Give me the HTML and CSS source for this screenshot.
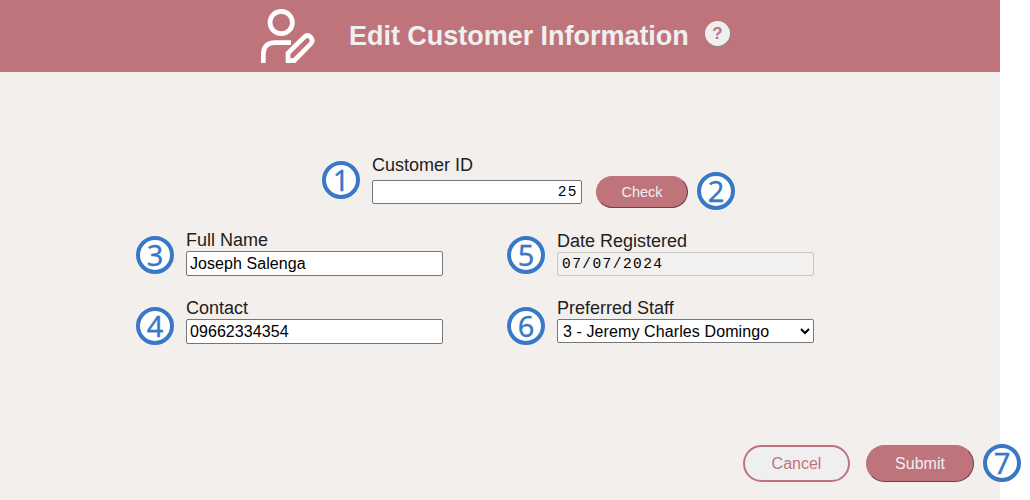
FILE: index.html
```html
<!DOCTYPE html>
<html lang="en">
<head>
<meta charset="utf-8">
<title>Edit Customer Information</title>
<link rel="stylesheet" href="styles.css">
</head>
<body>
<div class="page">
  <header class="header">
    <svg class="user-icon" viewBox="0 0 54 54" fill="none" stroke="#fff" stroke-width="4.7">
      <circle cx="20.2" cy="13.5" r="11.2"/>
      <path d="M2.3 54V45.5Q2.3 33.7 14 33.7H30"/>
      <path d="M27 51.7V44.2L43.2 28.2Q46.6 25 49.6 28.1Q52.8 31.6 49.6 35L33.2 51.7Z"/>
    </svg>
    <h1 class="title">Edit Customer Information</h1>
    <span class="help">?</span>
  </header>
  <form class="form">
    <div class="lookup">
      <div class="field lookup-field">
        <span class="badge">1</span>
        <label class="label">Customer ID</label>
        <input class="input mono right" type="text" value="25">
      </div>
      <div class="check-wrap">
        <button class="button check" type="button">Check</button>
        <span class="badge">2</span>
      </div>
    </div>
    <div class="fields">
      <div class="field">
        <span class="badge">3</span>
        <label class="label">Full Name</label>
        <input class="input tall" type="text" value="Joseph Salenga">
      </div>
      <div class="field date-field">
        <span class="badge">5</span>
        <label class="label">Date Registered</label>
        <input class="input mono" type="text" value="07/07/2024" disabled>
      </div>
      <div class="field">
        <span class="badge low">4</span>
        <label class="label">Contact</label>
        <input class="input tall" type="text" value="09662334354">
      </div>
      <div class="field">
        <span class="badge low">6</span>
        <label class="label">Preferred Staff</label>
        <select class="input select"><option>3 - Jeremy Charles Domingo</option></select>
      </div>
    </div>
    <div class="actions">
      <button class="button cancel" type="button">Cancel</button>
      <div class="submit-wrap">
        <button class="button submit" type="button">Submit</button>
        <span class="badge">7</span>
      </div>
    </div>
  </form>
</div>
</body>
</html>
```
FILE: styles.css
```css
* { box-sizing: border-box; }
body {
  margin: 0;
  background: #fff;
  font-family: "Liberation Sans", Arial, sans-serif;
  color: #212121;
}
.page {
  width: 1000px;
  height: 500px;
  background: #f3efec;
}
.header {
  display: flex;
  height: 72px;
  padding: 9px 0 0 261px;
  background: #bf747c;
}
.user-icon { width: 54px; height: 54px; flex: none; }
.title {
  margin: 0 0 0 34px;
  width: 340px;
  font-size: 27px;
  line-height: 54px;
  font-weight: bold;
  letter-spacing: -0.03px;
  color: #f0efef;
  white-space: nowrap;
}
.help {
  width: 25px;
  height: 25px;
  margin: 12px 0 0 16px;
  border-radius: 50%;
  background: #efefef;
  box-shadow: 1px 1px 1px #8e8588;
  color: #bf747c;
  font-size: 17px;
  font-weight: bold;
  line-height: 25px;
  text-align: center;
}
.form { padding: 83px 26px 0 0; }
.lookup {
  display: flex;
  gap: 14px;
  margin-left: 372px;
  height: 75px;
}
.field, .check-wrap, .submit-wrap { position: relative; }
.lookup-field { width: 210px; }
.label {
  display: block;
  height: 21px;
  font-size: 18px;
  line-height: 21px;
}
.lookup-field .label { height: 25px; }
.input {
  display: block;
  width: 100%;
  height: 24px;
  margin: 0;
  padding: 1px 3px;
  border: 1px solid #767676;
  border-radius: 2px;
  background: #fff;
  color: #000;
  font: 16px "Liberation Sans", Arial, sans-serif;
}
.input.tall { height: 25px; letter-spacing: 0.07px; }
.input.mono {
  padding-left: 4px;
  font-family: "Liberation Mono", monospace;
  font-size: 14.5px;
  letter-spacing: 1.45px;
}
.input.right { text-align: right; }
.input:disabled {
  border-color: #c8c6c5;
  background: #f3f1f0;
}
.input.select { padding: 0 1px; letter-spacing: 0.1px; }
.check-wrap { padding-top: 21px; }
.button {
  display: block;
  padding: 0;
  border: 1px solid;
  border-color: #bf747c #743c45 #743c45 #bf747c;
  border-radius: 20px;
  background: #bf747c;
  color: #f0efef;
  font: 16px "Liberation Sans", Arial, sans-serif;
}
.check { width: 92px; height: 32px; font-size: 14.5px; }
.fields {
  display: grid;
  grid-template-columns: 257px 257px;
  grid-template-rows: 68px 68px;
  column-gap: 114px;
  margin-left: 186px;
}
.date-field .label { height: 22px; line-height: 23px; }
.actions {
  display: flex;
  justify-content: flex-end;
  gap: 16px;
  padding-top: 79px;
}
.cancel {
  width: 107px;
  height: 37px;
  border: 2px solid #bf747c;
  background: #efefef;
  color: #bf747c;
}
.submit { width: 108px; height: 37px; }
.badge {
  position: absolute;
  left: -50px;
  top: 6px;
  width: 38px;
  height: 38px;
  border: 4px solid #3878c7;
  border-radius: 50%;
  background: #fff;
  color: #3878c7;
  font: 400 29px/29px "Noto Sans", sans-serif;
  text-align: center;
  -webkit-text-stroke: 0.3px #3878c7;
}
.badge.low { top: 9px; }
.check-wrap .badge { left: 101px; top: 17px; }
.submit-wrap .badge { left: 117px; top: -1px; }
```
